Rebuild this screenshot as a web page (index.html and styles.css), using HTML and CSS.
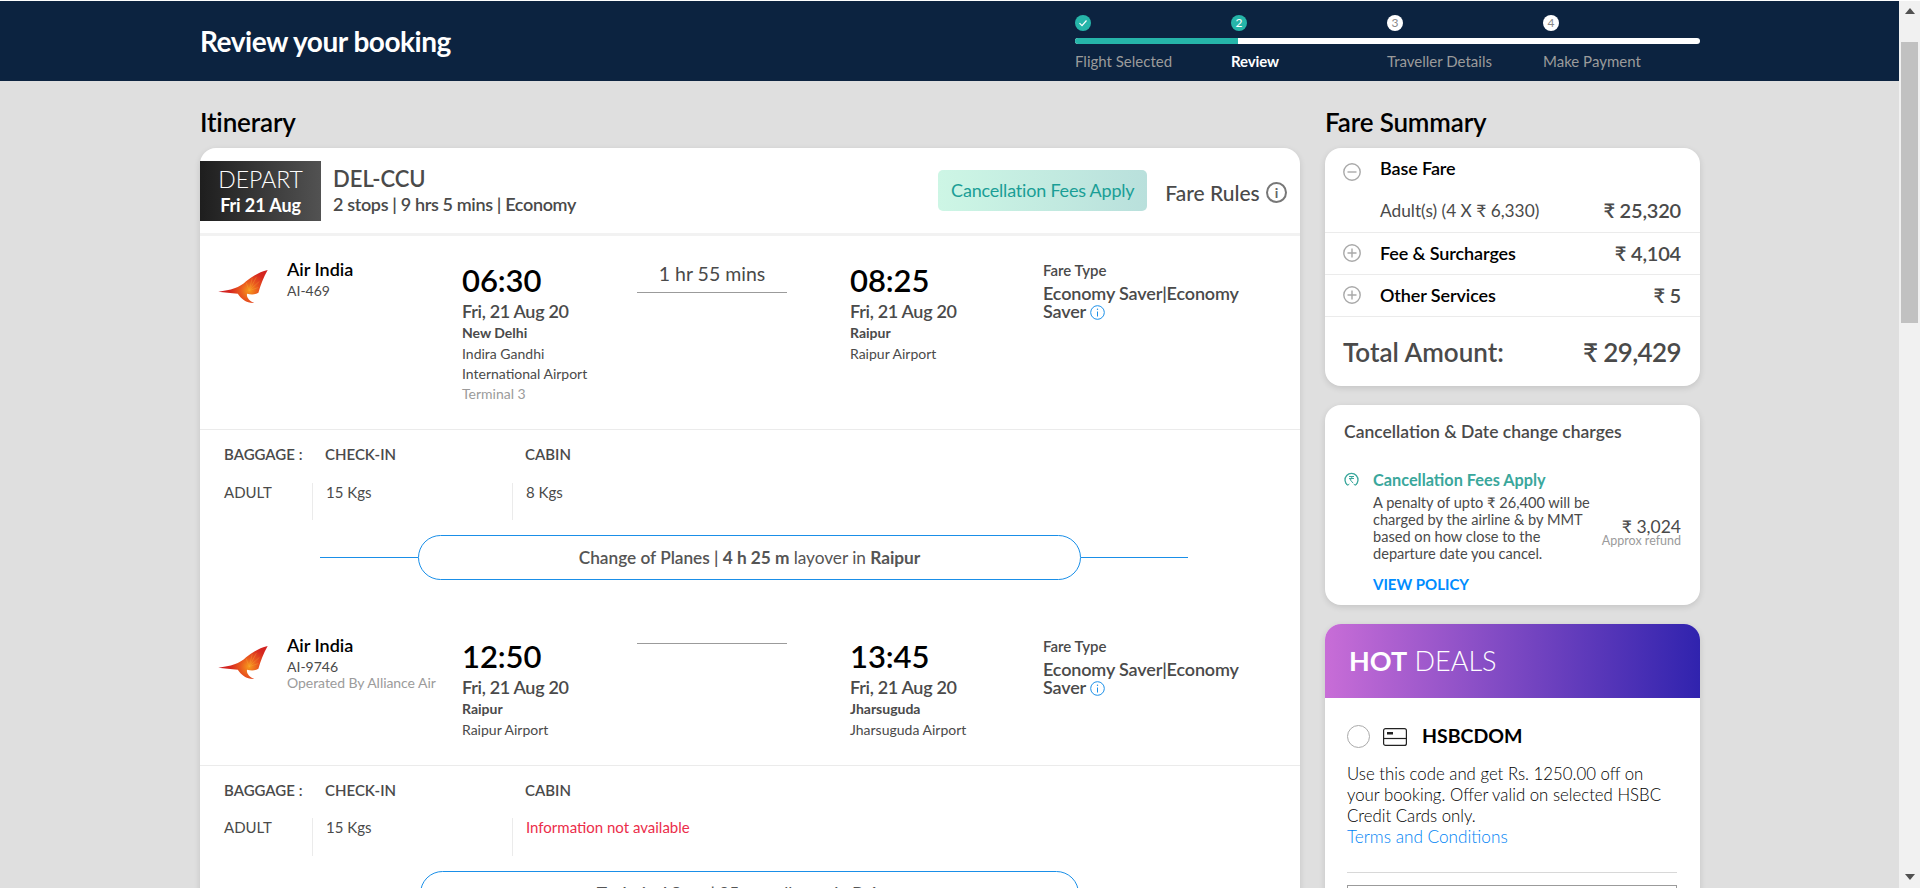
FILE: index.html
```html
<!DOCTYPE html>
<html lang="en">
<head>
<meta charset="utf-8">
<title>Review your booking</title>
<link rel="stylesheet" href="styles.css">
</head>
<body>
<svg width="0" height="0" class="defs">
  <defs>
    <radialGradient id="sun" cx="30" cy="21" r="28" gradientUnits="userSpaceOnUse">
      <stop offset="0" stop-color="#f79a1c"/>
      <stop offset=".3" stop-color="#ea5a1e"/>
      <stop offset=".65" stop-color="#d6281f"/>
      <stop offset="1" stop-color="#cf1f22"/>
    </radialGradient>
    <symbol id="tail" viewBox="0 0 50 34">
      <path fill="url(#sun)" d="M0 22C12 21 21 18 27 12C33 7 40 3 48 1C44 8 41 16 39 23C36 25 32 25 28 24C27 27 30 31 35 33C28 33.500 22 29 19 24C12 23 6 23 0 22Z"/>
      <g stroke="#f9b03a" stroke-width=".5" opacity=".6">
        <path d="M30 21L37 8M30 21L33 9M30 21L27 13M30 21L40 12M30 21L39 18"/>
      </g>
    </symbol>
    <symbol id="plus" viewBox="0 0 18 18">
      <circle cx="9" cy="9" r="8.200" fill="none" stroke="#a9a9a9" stroke-width="1.400"/>
      <path d="M4.500 9h9M9 4.500v9" stroke="#a9a9a9" stroke-width="1.400"/>
    </symbol>
    <symbol id="minus" viewBox="0 0 18 18">
      <circle cx="9" cy="9" r="8.200" fill="none" stroke="#a9a9a9" stroke-width="1.400"/>
      <path d="M4.500 9h9" stroke="#a9a9a9" stroke-width="1.400"/>
    </symbol>
    <symbol id="info" viewBox="0 0 15 15">
      <circle cx="7.500" cy="7.500" r="6.800" fill="none" stroke="#1a8fe8"/>
      <path d="M7.500 6.500v5" stroke="#1a8fe8"/>
      <circle cx="7.500" cy="4.300" r=".7" fill="#1a8fe8"/>
    </symbol>
  </defs>
</svg>
<div class="app">
  <div class="viewport">
    <header class="topbar">
      <h1 class="page-title">Review your booking</h1>
      <div class="stepper">
        <div class="step-dots">
          <div class="step"><span class="dot dot-on"><svg width="10" height="10" viewBox="0 0 10 10"><path d="M1.500 5.200L4 7.700L8.500 2.500" fill="none" stroke="#fff" stroke-width="1.200"/></svg></span></div>
          <div class="step"><span class="dot dot-on">2</span></div>
          <div class="step"><span class="dot">3</span></div>
          <div class="step"><span class="dot">4</span></div>
        </div>
        <div class="bar"><div class="bar-fill"></div></div>
        <div class="step-labels">
          <div class="step">Flight Selected</div>
          <div class="step step-active">Review</div>
          <div class="step">Traveller Details</div>
          <div class="step">Make Payment</div>
        </div>
      </div>
    </header>

    <main class="columns">
      <section class="col-left">
        <h2 class="section-title">Itinerary</h2>
        <div class="card itinerary">
          <div class="trip-head">
            <div class="depart-badge">
              <div class="depart-word">DEPART</div>
              <div class="depart-date">Fri 21 Aug</div>
            </div>
            <div class="trip-info">
              <div class="trip-route">DEL-CCU</div>
              <div class="trip-meta">2 stops | 9 hrs 5 mins | Economy</div>
            </div>
            <div class="fee-chip">Cancellation Fees Apply</div>
            <div class="fare-rules">Fare Rules <span class="rules-icon">i</span></div>
          </div>

          <div class="segment">
            <svg class="logo" width="52" height="35"><use href="#tail"/></svg>
            <div>
              <div class="air-name">Air India</div>
              <div class="air-code">AI-469</div>
            </div>
            <div class="place">
              <div class="time">06:30</div>
              <div class="date">Fri, 21 Aug 20</div>
              <div class="city">New Delhi</div>
              <div class="airport">Indira Gandhi<br>International Airport</div>
              <div class="terminal">Terminal 3</div>
            </div>
            <div class="dur"><div class="dur-text">1 hr 55 mins</div></div>
            <div class="place">
              <div class="time">08:25</div>
              <div class="date">Fri, 21 Aug 20</div>
              <div class="city">Raipur</div>
              <div class="airport">Raipur Airport</div>
            </div>
            <div class="fare-col">
              <div class="fare-label">Fare Type</div>
              <div class="fare-value">Economy Saver|Economy Saver <svg class="mini-info" width="15" height="15"><use href="#info"/></svg></div>
            </div>
          </div>

          <div class="baggage">
            <div class="bag-head"><div class="bag-a">BAGGAGE :</div><div class="bag-b">CHECK-IN</div><div>CABIN</div></div>
            <div class="bag-row"><div class="bag-a">ADULT</div><div class="bag-cell bag-b">15 Kgs</div><div class="bag-cell">8 Kgs</div></div>
          </div>

          <div class="layover">
            <span class="lay-line lay-left"></span>
            <div class="pill">Change of Planes | <b>4 h 25 m</b>&nbsp;<span class="thin">layover in</span>&nbsp;<b>Raipur</b></div>
            <span class="lay-line lay-right"></span>
          </div>

          <div class="segment segment-next">
            <svg class="logo" width="52" height="35"><use href="#tail"/></svg>
            <div>
              <div class="air-name">Air India</div>
              <div class="air-code">AI-9746</div>
              <div class="air-op">Operated By Alliance Air</div>
            </div>
            <div class="place">
              <div class="time">12:50</div>
              <div class="date">Fri, 21 Aug 20</div>
              <div class="city">Raipur</div>
              <div class="airport">Raipur Airport</div>
            </div>
            <div class="dur dur-empty"></div>
            <div class="place">
              <div class="time">13:45</div>
              <div class="date">Fri, 21 Aug 20</div>
              <div class="city">Jharsuguda</div>
              <div class="airport">Jharsuguda Airport</div>
            </div>
            <div class="fare-col">
              <div class="fare-label">Fare Type</div>
              <div class="fare-value">Economy Saver|Economy Saver <svg class="mini-info" width="15" height="15"><use href="#info"/></svg></div>
            </div>
          </div>

          <div class="baggage">
            <div class="bag-head"><div class="bag-a">BAGGAGE :</div><div class="bag-b">CHECK-IN</div><div>CABIN</div></div>
            <div class="bag-row"><div class="bag-a">ADULT</div><div class="bag-cell bag-b">15 Kgs</div><div class="bag-cell bag-warn">Information not available</div></div>
          </div>

          <div class="layover">
            <div class="pill pill-tech">Technical Stop | <b>35 m</b>&nbsp;<span class="thin">stall over in</span>&nbsp;<b>Raipur</b></div>
          </div>
        </div>
      </section>

      <aside class="col-right">
        <h2 class="section-title">Fare Summary</h2>
        <div class="card">
          <div class="fare-base">
            <div class="fare-row-head">
              <svg class="toggle toggle-low" width="18" height="18"><use href="#minus"/></svg>
              <span class="fare-name">Base Fare</span>
            </div>
            <div class="fare-sub"><span>Adult(s) (4 X ₹ 6,330)</span><span class="fare-amt">₹ 25,320</span></div>
          </div>
          <div class="fare-row">
            <svg class="toggle" width="18" height="18"><use href="#plus"/></svg>
            <span class="fare-name">Fee &amp; Surcharges</span>
            <span class="fare-amt">₹ 4,104</span>
          </div>
          <div class="fare-row">
            <svg class="toggle" width="18" height="18"><use href="#plus"/></svg>
            <span class="fare-name">Other Services</span>
            <span class="fare-amt">₹ 5</span>
          </div>
          <div class="fare-total"><span>Total Amount:</span><span class="total-amt">₹ 29,429</span></div>
        </div>

        <div class="card cancel">
          <div class="cancel-title">Cancellation &amp; Date change charges</div>
          <div class="cancel-head">
            <svg class="cancel-icon" width="15" height="15" viewBox="0 0 15 15">
              <path d="M3.500 13A6.500 6.500 0 1 1 11.500 13" fill="none" stroke="#3aa79c" stroke-width="1.300"/>
              <path d="M1.800 11.500L3.600 13.300L5.400 12M13.200 11.500L11.400 13.300L9.600 12" fill="none" stroke="#3aa79c"/>
              <path d="M5 4.500h5M5 6.500h5M6 4.500c2.500 0 2.500 3 0 3l3 3.500" fill="none" stroke="#3aa79c"/>
            </svg>
            <span class="cancel-fee">Cancellation Fees Apply</span>
          </div>
          <div class="cancel-body">
            <p class="cancel-text">A penalty of upto ₹ 26,400 will be charged by the airline &amp; by MMT based on how close to the departure date you cancel.</p>
            <div class="refund">
              <div class="refund-amt">₹ 3,024</div>
              <div class="refund-note">Approx refund</div>
            </div>
          </div>
          <div class="view-policy">VIEW POLICY</div>
        </div>

        <div class="card deals">
          <div class="deals-head"><b>HOT</b>&nbsp;DEALS</div>
          <div class="deals-body">
            <div class="deal-row">
              <span class="radio"></span>
              <svg class="deal-card" width="24" height="18" viewBox="0 0 24 18">
                <rect x=".6" y=".6" width="22.800" height="16.800" rx="2" fill="none" stroke="#222" stroke-width="1.200"/>
                <path d="M.6 10.500h22.800" stroke="#222" stroke-width="1.200"/>
                <rect x="4" y="4" width="6" height="2.500" fill="#222"/>
              </svg>
              <span class="deal-code">HSBCDOM</span>
            </div>
            <p class="deal-text">Use this code and get Rs. 1250.00 off on your booking. Offer valid on selected HSBC Credit Cards only.<br><span class="deal-link">Terms and Conditions</span></p>
            <div class="deal-rule"></div>
            <div class="deal-input"></div>
          </div>
        </div>
      </aside>
    </main>
  </div>
  <div class="scrollbar">
    <span class="arrow-up"></span>
    <div class="thumb"></div>
    <span class="arrow-down"></span>
  </div>
</div>
</body>
</html>
```
FILE: styles.css
```css
* { box-sizing: border-box; }
html, body { margin: 0; height: 888px; overflow: hidden; }
body { font-family: Lato, "Noto Sans", sans-serif; color: #4a4a4a; background: #fff; }
.defs { position: absolute; }
h1, h2, p { margin: 0; }

.app { display: flex; height: 888px; padding-top: 1px; overflow: hidden; }
.viewport { width: 1899px; height: 887px; overflow: hidden; background: #dfdfdf; }

.scrollbar { width: 21px; background: #f1f1f1; display: flex; flex-direction: column; align-items: center; }
.arrow-up { width: 0; height: 0; margin-top: 7px; border: 5px solid transparent; border-top: 0; border-bottom: 6px solid #505050; }
.thumb { width: 17px; height: 281px; margin-top: 28px; background: #c1c1c1; }
.arrow-down { width: 0; height: 0; margin-top: auto; margin-bottom: 8px; border: 5px solid transparent; border-bottom: 0; border-top: 6px solid #505050; }

.topbar { height: 80px; background: #0c2340; display: flex; justify-content: space-between; padding: 0 199px 0 200px; }
.page-title { font-size: 28px; font-weight: 700; line-height: 80px; color: #fff; letter-spacing: -.48px; }
.stepper { width: 625px; padding-top: 14px; }
.step-dots, .step-labels { display: flex; }
.step { width: 156px; flex: none; }
.dot { display: flex; align-items: center; justify-content: center; width: 16px; height: 16px; border-radius: 50%; background: #fff; color: #8a8a8a; font-size: 12px; line-height: 16px; }
.dot-on { background: #26b5a9; color: #fff; }
.bar { height: 6px; margin-top: 7px; background: #fff; border-radius: 3px; overflow: hidden; }
.bar-fill { width: 26%; height: 6px; background: #26b5a9; }
.step-labels { margin-top: 8px; font-size: 15px; line-height: 18px; color: #9b9b9b; }
.step-active { color: #fff; font-weight: 700; letter-spacing: -.1px; }

.columns { display: flex; gap: 25px; padding-left: 200px; }
.col-left { width: 1100px; flex: none; }
.col-right { width: 375px; flex: none; }
.section-title { font-size: 26px; font-weight: 600; line-height: 30px; color: #000; margin: 26px 0 11px; letter-spacing: -.15px; }
.card { background: #fff; border-radius: 16px; box-shadow: 0 2px 6px rgba(0,0,0,.12); }

.trip-head { height: 88px; padding-top: 13px; display: flex; align-items: flex-start; border-bottom: 3px solid #f2f2f2; }
.depart-badge { width: 121px; height: 60px; background: linear-gradient(90deg, #1e1e1e, #525252); color: #fff; text-align: center; }
.depart-word { font-size: 23px; font-weight: 300; line-height: 30px; padding-top: 3px; height: 33px; }
.depart-date { font-size: 18px; font-weight: 700; line-height: 22px; letter-spacing: -.1px; }
.trip-info { margin-left: 12px; }
.trip-route { font-size: 22px; font-weight: 600; line-height: 30px; padding-top: 3px; }
.trip-meta { font-size: 18px; font-weight: 600; line-height: 22px; margin-top: -1px; letter-spacing: -.35px; }
.fee-chip { margin: 9px 0 0 auto; width: 209px; height: 41px; line-height: 41px; text-align: center; font-size: 18px; color: #1a9e96; border-radius: 5px; letter-spacing: -.2px; background: linear-gradient(90deg, #cdf6e5, #b9e0dc); }
.fare-rules { margin: 8px 13px 0 18px; display: flex; align-items: center; height: 46px; font-size: 21px; font-weight: 500; white-space: pre; }
.rules-icon { display: inline-block; width: 21px; height: 21px; margin-left: 1px; border: 2px solid #777; border-radius: 50%; font-size: 14px; line-height: 17px; text-align: center; font-weight: 700; color: #666; }

.segment { display: grid; grid-template-columns: 67px 175px 175px 213px 194px 1fr; padding: 22px 0 0 20px; height: 194px; border-bottom: 1px solid #ebebeb; }
.segment-next { height: 154px; }
.logo { margin: 11px 0 0 -2px; display: block; }
.air-name { font-size: 18px; font-weight: 600; line-height: 22px; color: #000; }
.air-code { font-size: 14px; line-height: 16px; margin-top: 3px; }
.air-op { font-size: 14px; line-height: 16px; color: #9b9b9b; white-space: nowrap; letter-spacing: -.05px; }
.place { padding-top: 4px; }
.time { font-size: 31px; font-weight: 600; line-height: 36px; color: #000; letter-spacing: -.1px; }
.date { font-size: 18px; font-weight: 600; line-height: 22px; margin-top: 2px; letter-spacing: -.3px; }
.city { font-size: 14px; font-weight: 700; line-height: 18px; margin-top: 2px; }
.airport { font-size: 14px; line-height: 20px; margin-top: 2px; }
.terminal { font-size: 14px; line-height: 20px; color: #9b9b9b; }
.dur { width: 150px; margin-top: 5px; padding-bottom: 7px; border-bottom: 1px solid #9b9b9b; align-self: start; }
.dur-empty { padding-bottom: 4px; }
.dur-text { font-size: 19.500px; line-height: 22px; text-align: center; }
.fare-col { padding-top: 3px; width: 215px; margin-left: -1px; }
.fare-label { font-size: 15px; font-weight: 600; line-height: 18px; }
.fare-value { font-size: 18px; font-weight: 600; line-height: 18px; margin-top: 5px; letter-spacing: -.15px; }
.mini-info { vertical-align: -2px; }

.baggage { padding: 15px 0 0 24px; font-size: 15px; }
.bag-head { display: flex; font-weight: 600; line-height: 18px; }
.bag-a { width: 101px; flex: none; }
.bag-b { width: 200px; flex: none; }
.bag-row { display: flex; height: 37px; margin-top: 20px; line-height: 18px; }
.bag-row .bag-a { width: 88px; }
.bag-cell { border-left: 1px solid #ebebeb; padding: 0 0 0 13px; }
.bag-warn { color: #eb2d4a; }
.segment-next + .baggage .bag-row { margin-top: 19px; height: 38px; }

.layover { display: flex; align-items: center; margin: 15px 0 32px 120px; }
.lay-line { height: 1px; background: #1a8fe8; }
.lay-left { width: 98px; }
.lay-right { width: 107px; }
.pill { width: 663px; height: 45px; border: 1px solid #1a8fe8; border-radius: 23px; display: flex; align-items: center; justify-content: center; font-size: 17.300px; font-weight: 600; color: #555; white-space: pre; flex: none; letter-spacing: -.03px; }
.pill b { font-weight: 700; }
.pill .thin { font-weight: 400; }
.pill-tech { width: 659px; margin-left: 100px; }

.fare-base { height: 85px; padding-top: 9px; border-bottom: 1px solid #ebebeb; }
.fare-row-head { display: flex; height: 22px; padding-left: 18px; }
.toggle { flex: none; margin-right: 19px; }
.toggle-low { margin-top: 6px; }
.fare-name { font-size: 18px; font-weight: 600; line-height: 22px; color: #000; letter-spacing: -.1px; }
.fare-sub { display: flex; justify-content: space-between; align-items: center; height: 24px; margin-top: 19px; padding: 0 19px 0 55px; font-size: 17.300px; font-weight: 400; }
.fare-amt { font-size: 20px; font-weight: 600; letter-spacing: -.2px; }
.fare-row { height: 42px; padding: 0 19px 2px 18px; display: flex; align-items: center; border-bottom: 1px solid #ebebeb; }
.fare-row .fare-amt { margin-left: auto; }
.fare-total { height: 69px; padding: 0 19px 0 18px; display: flex; align-items: center; justify-content: space-between; font-size: 26px; font-weight: 600; }
.total-amt { letter-spacing: -.6px; }

.cancel { margin-top: 19px; height: 200px; padding: 16px 19px 0; }
.cancel-title { font-size: 17.500px; font-weight: 600; line-height: 22px; }
.cancel-head { display: flex; align-items: center; height: 20px; margin-top: 26px; }
.cancel-icon { margin-right: 14px; flex: none; }
.cancel-fee { font-size: 16.300px; font-weight: 700; color: #3aa79c; }
.cancel-body { display: flex; justify-content: space-between; margin-top: 5px; padding-left: 29px; }
.cancel-text { width: 226px; font-size: 14.600px; line-height: 17px; }
.refund { padding-top: 25px; text-align: right; }
.refund-amt { font-size: 17.500px; line-height: 16px; }
.refund-note { font-size: 12.500px; line-height: 12px; color: #9b9b9b; white-space: nowrap; }
.view-policy { margin: 12px 0 0 29px; font-size: 15px; font-weight: 700; line-height: 20px; color: #008cff; }

.deals { margin-top: 19px; height: 400px; border-radius: 16px 16px 0 0; }
.deals-head { height: 74px; padding: 0 0 2px 24px; display: flex; align-items: center; font-size: 27px; font-weight: 300; color: #fff; border-radius: 16px 16px 0 0; background: linear-gradient(90deg, #c86dd7, #3023ae); white-space: pre; }
.deals-head b { font-weight: 700; }
.deals-body { padding: 27px 23px 0 22px; }
.deal-row { display: flex; align-items: center; height: 23px; }
.radio { width: 23px; height: 23px; flex: none; border: 1px solid #aaa; border-radius: 50%; margin-right: 13px; }
.deal-card { margin-right: 15px; flex: none; }
.deal-code { font-size: 19.500px; font-weight: 700; color: #000; margin-top: -2px; }
.deal-text { margin-top: 15px; font-size: 16.800px; font-weight: 300; line-height: 21px; color: #000; }
.deal-link { color: #0084f5; font-size: 17.200px; }
.deal-rule { height: 1px; margin-top: 25px; background: #d8d8d8; }
.deal-input { height: 40px; margin-top: 12px; border: 1px solid #9b9b9b; }
```
